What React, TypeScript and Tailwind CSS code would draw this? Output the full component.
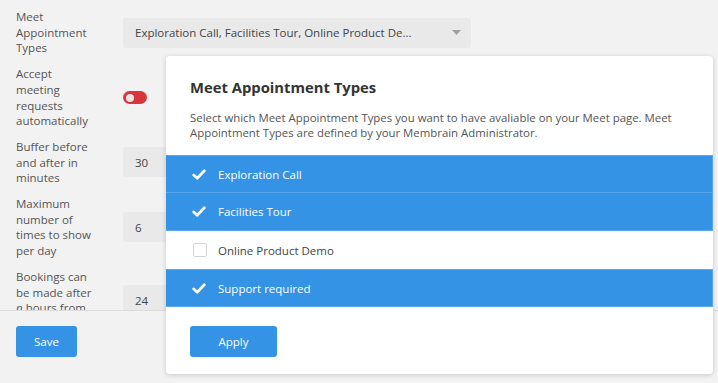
import { ReactNode } from 'react';

const CheckMark = () => (
  <svg width="14" height="11" viewBox="0 0 14 11" className="flex-shrink-0">
    <path d="M1.7 5.9 L5.2 9.2 L12.3 1.8" fill="none" stroke="#ffffff" strokeWidth="2.7" strokeLinecap="round" strokeLinejoin="round" />
  </svg>
);

const SettingRow = ({ label, children }: { label: ReactNode; children: ReactNode }) => (
  <div className="flex items-center">
    <div className="w-[80px] text-[11.5px] leading-[15.7px] text-[#555]">{label}</div>
    <div className="ml-[27px]">{children}</div>
  </div>
);

const NumberBox = ({ value }: { value: string }) => (
  <div className="w-[80px] h-[30px] rounded-[3px] bg-[#e9e9e9] pl-3 flex items-center text-[11.5px] text-[#444]">{value}</div>
);

const TypeRow = ({ label, checked, topBorder }: { label: string; checked: boolean; topBorder?: boolean }) => {
  if (!checked) {
    return (
      <div className="h-[38px] flex items-center pl-[27px] bg-white">
        <span className="w-[14px] h-[14px] rounded-[2px] border border-[#d4d4d4] bg-white flex-shrink-0"></span>
        <span className="ml-[11px] text-[11.5px] text-[#444]">{label}</span>
      </div>
    );
  }
  return (
    <div
      className={`h-[38px] flex items-center pl-[26px] bg-[#3593e6] border-b border-r border-[#57a6ee] ${topBorder ? 'border-t' : ''}`}
    >
      <CheckMark />
      <span className="ml-[12px] text-[11.5px] text-white">{label}</span>
    </div>
  );
};

export default function App() {
  return (
    <div
      className="relative w-[718px] h-[383px] overflow-hidden bg-[#f2f2f2]"
      style={{ fontFamily: '"Open Sans", "Liberation Sans", sans-serif' }}
    >
      {/* Settings form */}
      <div className="h-[311px] overflow-hidden border-b border-[#dcdcdc] pl-4 pt-[9px]">
        <div className="flex flex-col gap-[10px]">
          <SettingRow label={<>Meet<br />Appointment<br />Types</>}>
            <div className="w-[348px] h-[30px] rounded-[3px] bg-[#e9e9e9] pl-3 pr-[10px] flex items-center justify-between text-[11.5px] text-[#444]">
              <span>Exploration Call, Facilities Tour, Online Product De...</span>
              <svg width="9" height="5" viewBox="0 0 9 5">
                <path d="M0 0 H9 L4.5 5 Z" fill="#a0a0a0" />
              </svg>
            </div>
          </SettingRow>

          <SettingRow label="Accept meeting requests automatically">
            <div className="w-[24px] h-[13px] rounded-full bg-[#d8363c] flex items-center pl-[3px]">
              <span className="w-[8px] h-[8px] rounded-full bg-[#e6e6e6]"></span>
            </div>
          </SettingRow>

          <SettingRow label="Buffer before and after in minutes">
            <NumberBox value="30" />
          </SettingRow>

          <SettingRow label="Maximum number of times to show per day">
            <NumberBox value="6" />
          </SettingRow>

          <SettingRow label={<>Bookings can be made after <i>n</i> hours from now</>}>
            <NumberBox value="24" />
          </SettingRow>
        </div>
      </div>

      <button className="ml-4 mt-[15px] w-[61px] h-[31px] rounded-[3px] bg-[#3593e6] text-white text-[11.5px]">
        Save
      </button>

      {/* Popup */}
      <div className="absolute left-[166px] top-[56px] w-[547px] h-[318px] bg-white rounded-[4px] shadow-[0_1px_5px_rgba(0,0,0,0.18)] overflow-hidden">
        <h2 className="mt-[21px] px-6 text-[14.8px] leading-[21px] font-bold text-[#333]">Meet Appointment Types</h2>
        <p className="mt-[13px] px-6 text-[11.4px] leading-[14.6px] text-[#555]">
          Select which Meet Appointment Types you want to have avaliable on your Meet page. Meet Appointment Types are defined by your Membrain Administrator.
        </p>

        <div className="mt-[15px]">
          <TypeRow label="Exploration Call" checked topBorder />
          <TypeRow label="Facilities Tour" checked />
          <TypeRow label="Online Product Demo" checked={false} />
          <TypeRow label="Support required" checked topBorder />
        </div>

        <button className="ml-6 mt-[19px] w-[87px] h-[31px] rounded-[3px] bg-[#3593e6] text-white text-[11.5px]">
          Apply
        </button>
      </div>
    </div>
  );
}
